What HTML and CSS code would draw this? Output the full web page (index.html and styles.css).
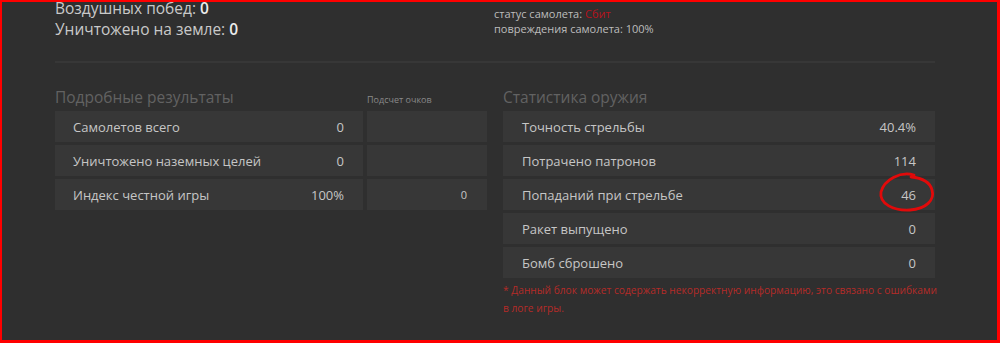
FILE: index.html
```html
<!DOCTYPE html>
<html lang="ru">
<head>
<meta charset="utf-8">
<title>Статистика</title>
<link rel="stylesheet" href="styles.css">
</head>
<body>
<main class="page">
  <section class="summary">
    <div class="kills">
      <div>Воздушных побед: <b>0</b></div>
      <div>Уничтожено на земле: <b>0</b></div>
    </div>
    <div class="status">
      <div>статус самолета: <span class="down">Сбит</span></div>
      <div>повреждения самолета: 100%</div>
    </div>
  </section>
  <div class="divider"></div>
  <section class="columns">
    <div class="col">
      <div class="col-head two">
        <h2>Подробные результаты</h2>
        <span class="score-label">Подсчет очков</span>
      </div>
      <div class="table two">
        <div class="cell"><span>Самолетов всего</span><span>0</span></div>
        <div class="cell"></div>
        <div class="cell"><span>Уничтожено наземных целей</span><span>0</span></div>
        <div class="cell"></div>
        <div class="cell"><span>Индекс честной игры</span><span>100%</span></div>
        <div class="cell score"><span>0</span></div>
      </div>
    </div>
    <div class="col">
      <div class="col-head">
        <h2>Статистика оружия</h2>
      </div>
      <div class="table">
        <div class="cell wide"><span>Точность стрельбы</span><span>40.4%</span></div>
        <div class="cell wide"><span>Потрачено патронов</span><span>114</span></div>
        <div class="cell wide"><span>Попаданий при стрельбе</span><span>46</span></div>
        <div class="cell wide"><span>Ракет выпущено</span><span>0</span></div>
        <div class="cell wide"><span>Бомб сброшено</span><span>0</span></div>
      </div>
      <p class="note">* Данный блок может содержать некорректную информацию, это связано с ошибками в логе игры.</p>
    </div>
  </section>
</main>
<svg class="scribble" width="1000" height="343" viewBox="0 0 1000 343" aria-hidden="true">
  <path d="M914 175 C 900 171, 884 180, 881 192 C 879 204, 894 211, 910 210 C 926 209, 935 200, 932 190 C 930 182, 922 178, 911 177" fill="none" stroke="#e10a0a" stroke-width="2.8" stroke-linecap="round"/>
</svg>
<div class="frame"></div>
</body>
</html>
```

FILE: styles.css
```css
* { box-sizing: border-box; }
html, body {
  margin: 0;
  padding: 0;
  background: #2f2f2f;
  height: 343px;
  overflow: hidden;
}
body {
  font-family: "Open Sans", "Noto Sans", sans-serif;
  color: #c8c8c8;
}
.page {
  width: 935px;
  padding-left: 55px;
}
.summary {
  display: grid;
  grid-template-columns: 439px 1fr;
  margin-top: -2px;
}
.kills {
  font-size: 15.5px;
  line-height: 21px;
  color: #c9c9c9;
}
.kills b {
  font-weight: 600;
  color: #ececec;
}
.status {
  padding-top: 8px;
  font-size: 11px;
  line-height: 15px;
  color: #bdbdbd;
}
.down { color: #b8121c; }
.divider {
  height: 2px;
  background: #373737;
  margin-top: 21px;
}
.columns {
  display: grid;
  grid-template-columns: 432px 432px;
  column-gap: 16px;
  margin-top: 24px;
}
.col-head {
  display: grid;
  align-items: baseline;
  height: 24px;
}
.two {
  grid-template-columns: 308px 120px;
  column-gap: 4px;
}
.col-head h2 {
  margin: 0;
  font-size: 15.5px;
  font-weight: 400;
  line-height: 20px;
  color: #626262;
}
.score-label {
  font-size: 9px;
  color: #8a8a8a;
}
.table {
  display: grid;
  row-gap: 3px;
}
.table.two { column-gap: 4px; }
.cell {
  height: 31px;
  background: #373737;
  display: flex;
  align-items: center;
  justify-content: space-between;
  padding: 0 19px 0 18px;
  font-size: 13px;
  color: #c6c6c6;
}
.cell.wide { padding: 0 19px 0 19px; }
.cell.score {
  justify-content: flex-end;
  padding-right: 20px;
  font-size: 11px;
  color: #c6c6c6;
}
.note {
  margin: 3px -4px 0 0;
  font-size: 10.2px;
  line-height: 18px;
  font-weight: 400;
  color: #b52b28;
}
.scribble {
  position: fixed;
  left: 0;
  top: 0;
  pointer-events: none;
}
.frame {
  position: fixed;
  left: 0;
  top: 0;
  width: 1000px;
  height: 343px;
  border-style: solid;
  border-color: #ff0000;
  border-width: 2px 3px 3px 2px;
  pointer-events: none;
}
```
